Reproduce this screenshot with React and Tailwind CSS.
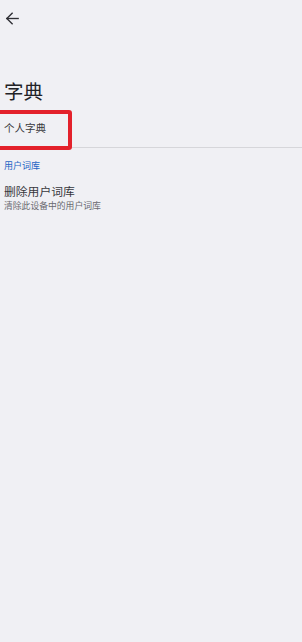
import React from "react";

export default function App() {
  const font = { fontFamily: '"Noto Sans CJK SC", "Noto Sans", sans-serif' };
  return (
    <div className="w-full h-[642px] bg-[#f0f0f4] text-[#2b2b30]" style={font}>
      <div className="h-[37px] flex items-center pl-[4px]">
        <svg width="17" height="17" viewBox="0 0 24 24" fill="none" stroke="#2f2f34" strokeWidth="1.9" strokeLinecap="square">
          <path d="M20 12H4" />
          <path d="M11.5 4.5L4 12L11.5 19.5" />
        </svg>
      </div>
      <div className="mt-[41px] h-[25px] flex items-center pl-[4px] text-[19.5px] leading-none text-[#222226]">字典</div>
      <div className="relative mt-[7px] h-[38px] flex items-center pl-[4px] text-[10.5px] leading-none text-[#38383d] border-b border-[#d6d6da]">
        个人字典
        <div className="absolute left-[-6px] top-0 w-[78px] h-[40px] border-[4px] border-[#e3212b] rounded-[3px]" />
      </div>
      <div className="h-[34px] flex items-center pl-[4px] text-[9px] leading-none text-[#2464c4]">用户词库</div>
      <div className="mt-[1px] h-[16px] flex items-center pl-[4px] text-[11.8px] leading-none text-[#38383d]">删除用户词库</div>
      <div className="h-[14px] flex items-center pl-[4px] text-[8.8px] leading-none text-[#6a6a70]">清除此设备中的用户词库</div>
    </div>
  );
}
